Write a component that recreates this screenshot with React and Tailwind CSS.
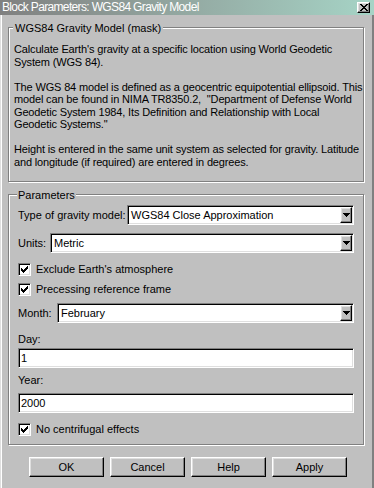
import React from "react";

const sunken =
  "border border-t-[#808080] border-l-[#808080] border-b-white border-r-white shadow-[inset_1px_1px_0_#000,inset_-1px_-1px_0_#dfdfdf]";
const raised =
  "border border-t-white border-l-white border-b-black border-r-black shadow-[inset_-1px_-1px_0_#808080,inset_1px_1px_0_#dfdfdf]";

function Arrow() {
  return (
    <div className={`w-[12px] h-full bg-[#c0c0c0] flex items-center justify-center ${raised}`}>
      <svg width="7" height="4" viewBox="0 0 7 4" shapeRendering="crispEdges">
        <rect x="0" y="0" width="7" height="1" fill="#000" />
        <rect x="1" y="1" width="5" height="1" fill="#000" />
        <rect x="2" y="2" width="3" height="1" fill="#000" />
        <rect x="3" y="3" width="1" height="1" fill="#000" />
      </svg>
    </div>
  );
}

function Select({ value }) {
  return (
    <div className={`flex-1 h-[20px] bg-white flex items-stretch p-[1px] ${sunken}`}>
      <span className="flex-1 pl-[2px] leading-[16px] whitespace-nowrap">{value}</span>
      <Arrow />
    </div>
  );
}

function Check({ label }) {
  return (
    <div className="flex items-center h-[13px] gap-[5px]">
      <div className={`w-[13px] h-[13px] bg-white flex items-center justify-center ${sunken}`}>
        <svg width="7" height="7" viewBox="0 0 7 7" shapeRendering="crispEdges">
          <rect x="6" y="0" width="1" height="1" fill="#000" />
          <rect x="5" y="1" width="2" height="1" fill="#000" />
          <rect x="0" y="2" width="1" height="1" fill="#000" />
          <rect x="4" y="2" width="3" height="1" fill="#000" />
          <rect x="0" y="3" width="2" height="1" fill="#000" />
          <rect x="3" y="3" width="3" height="1" fill="#000" />
          <rect x="0" y="4" width="5" height="1" fill="#000" />
          <rect x="1" y="5" width="3" height="1" fill="#000" />
          <rect x="2" y="6" width="1" height="1" fill="#000" />
        </svg>
      </div>
      <span className="leading-[13px] whitespace-nowrap">{label}</span>
    </div>
  );
}

function Input({ value }) {
  return (
    <div className={`h-[20px] bg-white p-[1px] ${sunken}`}>
      <span className="pl-[1px] leading-[16px] block">{value}</span>
    </div>
  );
}

function Button({ children }) {
  return (
    <div className={`w-[75px] h-[20px] bg-[#c0c0c0] flex items-center justify-center ${raised}`}>
      {children}
    </div>
  );
}

const group = "border border-[#808080] shadow-[1px_1px_0_#fff,inset_1px_1px_0_#fff]";

export default function App() {
  return (
    <div className="w-[374px] h-[488px] bg-[#c0c0c0] overflow-hidden flex flex-col text-[11px] text-black font-['Liberation_Sans',Arial,sans-serif]">
      <div className="h-[15px] shrink-0 flex items-center justify-between bg-gradient-to-r from-[#808080] to-[#a6d4c6] pl-[2px] pr-[4px]">
        <span className="text-white text-[12px] tracking-[-0.65px] leading-[15px] whitespace-nowrap">
          Block Parameters: WGS84 Gravity Model
        </span>
        <div className={`w-[13px] h-[11px] bg-[#c0c0c0] flex items-center justify-center ${raised}`}>
          <svg width="8" height="7" viewBox="0 0 8 7" shapeRendering="crispEdges">
            <path d="M0 0h2v1H0zM6 0h2v1H6zM1 1h2v1H1zM5 1h2v1H5zM2 2h4v1H2zM3 3h2v1H3zM2 4h4v1H2zM1 5h2v1H1zM5 5h2v1H5zM0 6h2v1H0zM6 6h2v1H6z" fill="#000" />
          </svg>
        </div>
      </div>
      <div className="flex-1 flex flex-col pl-[8px] pr-[8px] border-l border-l-[#dfdfdf] border-r-2 border-r-[#808080] shadow-[inset_1px_0_0_#fff]">
        <div className={`mt-[12px] ml-[-1px] px-[5px] pb-[13px] ${group}`}>
          <div className="-mt-[6px] -ml-[1px] w-fit bg-[#c0c0c0] px-[2px] leading-[13px] whitespace-nowrap">
            WGS84 Gravity Model (mask)
          </div>
          <div className="mt-[8px] leading-[12.5px] tracking-[-0.15px] whitespace-pre">
            {"Calculate Earth's gravity at a specific location using World Geodetic\nSystem (WGS 84).\n\nThe WGS 84 model is defined as a geocentric equipotential ellipsoid. This\nmodel can be found in NIMA TR8350.2,  \"Department of Defense World\nGeodetic System 1984, Its Definition and Relationship with Local\nGeodetic Systems.\"\n\nHeight is entered in the same unit system as selected for gravity. Latitude\nand longitude (if required) are entered in degrees."}
          </div>
        </div>
        <div className={`mt-[12px] ml-[-1px] pl-[9px] pr-[9px] pb-[8px] flex flex-col ${group}`}>
          <div className="-mt-[6px] ml-[-1px] w-fit bg-[#c0c0c0] px-[1px] leading-[13px] whitespace-nowrap">
            Parameters
          </div>
          <div className="mt-[3px] flex items-center">
            <span className="w-[109px] whitespace-nowrap">Type of gravity model:</span>
            <Select value="WGS84 Close Approximation" />
          </div>
          <div className="mt-[8px] flex items-center">
            <span className="w-[32px] whitespace-nowrap">Units:</span>
            <Select value="Metric" />
          </div>
          <div className="mt-[10px]">
            <Check label="Exclude Earth's atmosphere" />
          </div>
          <div className="mt-[7px]">
            <Check label="Precessing reference frame" />
          </div>
          <div className="mt-[7px] flex items-center">
            <span className="w-[39px] whitespace-nowrap">Month:</span>
            <Select value="February" />
          </div>
          <div className="mt-[10px] leading-[13px]">Day:</div>
          <div className="mt-[2px]">
            <Input value="1" />
          </div>
          <div className="mt-[6px] leading-[13px]">Year:</div>
          <div className="mt-[6px]">
            <Input value="2000" />
          </div>
          <div className="mt-[10px]">
            <Check label="No centrifugal effects" />
          </div>
        </div>
        <div className="mt-[12px] ml-[20px] flex gap-[6px]">
          <Button>OK</Button>
          <Button>Cancel</Button>
          <Button>Help</Button>
          <Button>Apply</Button>
        </div>
      </div>
    </div>
  );
}
